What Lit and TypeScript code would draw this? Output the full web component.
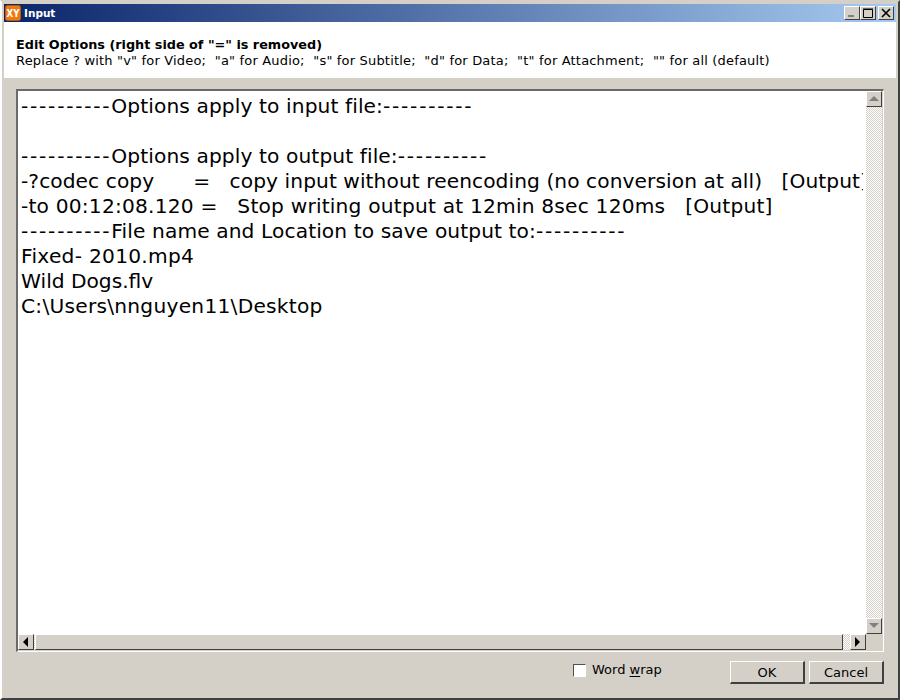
import { LitElement, html, css } from 'lit';
import { customElement } from 'lit/decorators.js';

// tracking nudges the DejaVu metrics towards the wider font in the screenshot
const LINES = [
  { text: '----------Options apply to input file:----------', tracking: 0.1 },
  { text: ' ', tracking: 0 },
  { text: '----------Options apply to output file:----------', tracking: 0.1 },
  { text: '-?codec copy      =   copy input without reencoding (no conversion at all)   [Output]', tracking: 0.07 },
  { text: '-to 00:12:08.120 =   Stop writing output at 12min 8sec 120ms   [Output]', tracking: 0.2 },
  { text: '----------File name and Location to save output to:----------', tracking: 0.1 },
  { text: 'Fixed- 2010.mp4', tracking: 0.27 },
  { text: 'Wild Dogs.flv', tracking: 0 },
  { text: 'C:\\Users\\nnguyen11\\Desktop', tracking: 0.25 },
];

@customElement('app-root')
export class AppRoot extends LitElement {
  static override styles = css`
    :host {
      display: block;
      width: 900px;
      height: 700px;
      font-family: 'DejaVu Sans', Verdana, sans-serif;
      color: #000;
    }

    .window {
      box-sizing: border-box;
      width: 900px;
      height: 700px;
      display: flex;
      flex-direction: column;
      background: #d4d0c8;
      padding: 2px;
      border-top: 2px solid #d4d0c8;
      border-left: 2px solid #fff;
      border-right: 2px solid #404040;
      border-bottom: 2px solid #404040;
    }

    .titlebar {
      height: 18px;
      flex: none;
      display: flex;
      align-items: center;
      background: linear-gradient(90deg, #0a246a, #a6caf0);
      padding: 0 2px 0 1px;
    }

    .logo {
      width: 16px;
      height: 16px;
      flex: none;
    }

    .logo text {
      font-family: 'DejaVu Sans', sans-serif;
      font-size: 10px;
      font-weight: 700;
      fill: #fff;
    }

    .title {
      flex: 1;
      margin-left: 3px;
      font-size: 10.5px;
      font-weight: 700;
      color: #fff;
    }

    .ctl {
      box-sizing: border-box;
      width: 16px;
      height: 14px;
      flex: none;
      background: #d4d0c8;
      border: 1px solid;
      border-color: #fff #404040 #404040 #fff;
      display: flex;
      align-items: center;
      justify-content: center;
    }

    .ctl svg {
      display: block;
    }

    .ctl.close {
      margin-left: 2px;
    }

    .header {
      height: 56px;
      flex: none;
      box-sizing: border-box;
      background: #fff;
      padding: 15px 12px 0;
      line-height: 16px;
    }

    .header b {
      display: block;
      font-size: 12.8px;
    }

    .sub {
      font-size: 13px;
      letter-spacing: 0.18px;
      white-space: pre;
    }

    .box {
      flex: none;
      margin: 11px 0 0 12px;
      width: 868px;
      height: 563px;
      box-sizing: border-box;
      padding: 0 1px 1px 0;
      border: 2px solid;
      border-color: #6a6a68 #fff #fff #6a6a68;
      border-right-width: 1px;
      border-bottom-width: 1px;
      display: grid;
      grid-template-columns: 1fr 16px;
      grid-template-rows: 1fr 16px;
      background: #d4d0c8;
    }

    .text {
      background: #fff;
      overflow: hidden;
      padding: 3px 3px 0 3px;
      font-size: 20.2px;
      line-height: 25px;
    }

    .line {
      white-space: pre;
      overflow: hidden;
    }

    .dash {
      letter-spacing: 1.75px;
    }

    .vbar,
    .hbar {
      display: flex;
      background-color: #fff;
      background-image: conic-gradient(#d4d0c8 25%, #fff 0 50%, #d4d0c8 0 75%, #fff 0);
      background-size: 2px 2px;
    }

    .vbar {
      flex-direction: column;
      justify-content: space-between;
    }

    .btn {
      box-sizing: border-box;
      width: 16px;
      height: 16px;
      flex: none;
      background: #d4d0c8;
      border: 1px solid;
      border-color: #fff #404040 #404040 #fff;
      display: flex;
      align-items: center;
      justify-content: center;
    }

    .thumb {
      box-sizing: border-box;
      width: 808px;
      margin-left: 1px;
      height: 16px;
      background: #d4d0c8;
      border: 1px solid;
      border-color: #fff #404040 #404040 #fff;
    }

    .spacer {
      flex: 1;
    }

    .corner {
      background: #d4d0c8;
    }

    .footer {
      flex: 1;
      display: flex;
      align-items: flex-start;
      gap: 4px;
      padding: 9px 12px 0 0;
    }

    .check {
      margin-left: 569px;
      margin-right: auto;
      margin-top: 2px;
      display: flex;
      align-items: center;
      font-size: 13px;
      line-height: 14px;
    }

    .checkbox {
      box-sizing: border-box;
      width: 13px;
      height: 13px;
      background: #fff;
      border: 1px solid;
      border-color: #505050 #fff #fff #505050;
      margin-right: 6px;
    }

    .check u {
      text-underline-offset: 2px;
    }

    .push {
      box-sizing: border-box;
      width: 75px;
      height: 23px;
      background: #d4d0c8;
      border: 1px solid;
      border-color: #fff #404040 #404040 #fff;
      border-right-width: 2px;
      border-bottom-width: 2px;
      font-size: 13px;
      text-align: center;
      line-height: 22px;
    }
  `;

  private renderLine(text: string) {
    // runs of dashes are much wider in the reference than the rest of the line
    return text
      .split(/(-{10})/)
      .map((part) => (part.length === 10 && part[0] === '-' ? html`<span class="dash">${part}</span>` : part));
  }

  override render() {
    return html`
      <div class="window">
        <div class="titlebar">
          <svg class="logo" viewBox="0 0 16 16">
            <rect x="0.5" y="0.5" width="15" height="15" rx="2" fill="#f07a10" stroke="#b85a08" />
            <text x="1.5" y="12" textLength="13" lengthAdjust="spacingAndGlyphs">XY</text>
          </svg>
          <span class="title">Input</span>
          <div class="ctl">
            <svg width="10" height="10"><rect x="1" y="7" width="6" height="2" fill="#808080" /></svg>
          </div>
          <div class="ctl">
            <svg width="10" height="10"><path d="M0.5 1.5 H9.5 V9.5 H0.5 Z M0 1 H10" fill="none" stroke="#000" /></svg>
          </div>
          <div class="ctl close">
            <svg width="10" height="10"><path d="M1 1 L9 9 M9 1 L1 9" stroke="#000" stroke-width="1.6" /></svg>
          </div>
        </div>

        <div class="header">
          <b>Edit Options (right side of "=" is removed)</b>
          <div class="sub">Replace ? with "v" for Video;  "a" for Audio;  "s" for Subtitle;  "d" for Data;  "t" for Attachment;  "" for all (default)</div>
        </div>

        <div class="box">
          <div class="text">
            ${LINES.map((l) => html`<div class="line" style="letter-spacing:${l.tracking}px">${this.renderLine(l.text)}</div>`)}
          </div>
          <div class="vbar">
            <div class="btn">
              <svg width="10" height="6"><path d="M5 0 L10 5 H0 Z" fill="#808080" /></svg>
            </div>
            <div class="btn">
              <svg width="10" height="6"><path d="M0 0 H10 L5 5 Z" fill="#808080" /></svg>
            </div>
          </div>
          <div class="hbar">
            <div class="btn">
              <svg width="6" height="10"><path d="M5 0 V10 L0 5 Z" fill="#000" /></svg>
            </div>
            <div class="thumb"></div>
            <div class="spacer"></div>
            <div class="btn">
              <svg width="6" height="10"><path d="M0 0 V10 L5 5 Z" fill="#000" /></svg>
            </div>
          </div>
          <div class="corner"></div>
        </div>

        <div class="footer">
          <div class="check">
            <span class="checkbox"></span>
            <span>Word <u>w</u>rap</span>
          </div>
          <div class="push">OK</div>
          <div class="push">Cancel</div>
        </div>
      </div>
    `;
  }
}
